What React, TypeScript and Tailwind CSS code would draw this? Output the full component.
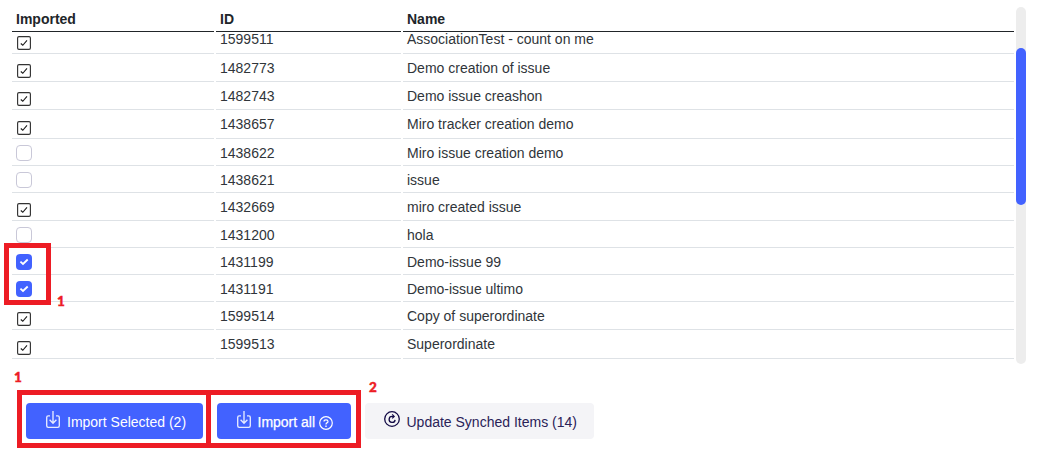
import React from "react";

type State = "synced" | "empty" | "selected";
interface Row {
  id: string;
  name: string;
  state: State;
  height: string;
}

const rows: Row[] = [
  { id: "1599511", name: "AssociationTest - count on me", state: "synced", height: "h-[29px]" },
  { id: "1482773", name: "Demo creation of issue", state: "synced", height: "h-[28px]" },
  { id: "1482743", name: "Demo issue creashon", state: "synced", height: "h-[28px]" },
  { id: "1438657", name: "Miro tracker creation demo", state: "synced", height: "h-[29px]" },
  { id: "1438622", name: "Miro issue creation demo", state: "empty", height: "h-[27px]" },
  { id: "1438621", name: "issue", state: "empty", height: "h-[27px]" },
  { id: "1432669", name: "miro created issue", state: "synced", height: "h-[28px]" },
  { id: "1431200", name: "hola", state: "empty", height: "h-[27px]" },
  { id: "1431199", name: "Demo-issue 99", state: "selected", height: "h-[27px]" },
  { id: "1431191", name: "Demo-issue ultimo", state: "selected", height: "h-[27px]" },
  { id: "1599514", name: "Copy of superordinate", state: "synced", height: "h-[28px]" },
  { id: "1599513", name: "Superordinate", state: "synced", height: "h-[29px]" },
];

function Check({ state }: { state: State }) {
  if (state === "synced") {
    return (
      <svg className="mb-[3px] ml-[5px] mt-auto block h-[14px] w-[14px]" viewBox="0 0 14 14" fill="none">
        <rect x="0.6" y="0.6" width="12.8" height="12.8" rx="1.4" stroke="#333" strokeWidth="1.15" />
        <path d="M3.8 7.5L5.8 9.3L10 4.4" stroke="#1d1d1d" strokeWidth="1.15" />
      </svg>
    );
  }
  if (state === "empty") {
    return <span className="ml-1 mt-1.5 block h-4 w-4 rounded-[4px] border border-[#c9c8d8] bg-white" />;
  }
  return (
    <span className="ml-1 mt-1.5 block h-4 w-4 rounded-[4px] bg-[#4262ff]">
      <svg className="block h-4 w-4" viewBox="0 0 16 16" fill="none">
        <path d="M4.4 7.6L7 10L11.7 5.5" stroke="#fff" strokeWidth="1.8" />
      </svg>
    </span>
  );
}

function ImportIcon() {
  return (
    <svg className="block h-[17px] w-[14px] shrink-0" viewBox="0 0 14 17" fill="none" stroke="#e6eaff" strokeWidth="1.35">
      <path d="M4 4.9H2.2Q0.7 4.9 0.7 6.4V14.8Q0.7 16.3 2.2 16.3H11.8Q13.3 16.3 13.3 14.8V6.4Q13.3 4.9 11.8 4.9H10" />
      <path d="M7 0V12.2M3.6 8.8L7 12.2L10.4 8.8" />
    </svg>
  );
}

function HelpIcon() {
  return (
    <svg className="block h-[14px] w-[14px] shrink-0" viewBox="0 0 14 14" fill="none" stroke="#fff" strokeWidth="1.2">
      <circle cx="7" cy="7" r="6.3" />
      <path d="M5 5.6Q5 3.8 7 3.8Q9 3.8 9 5.4Q9 6.4 7.9 6.9Q7 7.3 7 8.5" />
      <path d="M7 9.6V10.9" strokeWidth="1.4" />
    </svg>
  );
}

function RefreshIcon() {
  return (
    <svg className="block h-4 w-4 shrink-0" viewBox="0 0 16 16" fill="none" stroke="#120a45" strokeWidth="1.3">
      <circle cx="8" cy="8" r="7.3" />
      <path d="M9.8 5.4H8.2A3 3 0 1 0 11.1 8.8" />
      <path d="M8.2 3.4L10.2 5.4L8.2 7.4" strokeWidth="1.2" />
    </svg>
  );
}

export default function App() {
  return (
    <div className="relative h-[454px] w-[1040px] overflow-hidden bg-white pl-3 pt-[7px] font-['Liberation_Sans',Arial,sans-serif] text-[14px] leading-4 text-[#212529]">
      <div className="flex gap-[2px]">
        <div className="w-[1002px]">
          <div className="grid h-[25px] grid-cols-[202px_185px_611px] gap-x-[2px] font-bold">
            {["Imported", "ID", "Name"].map((h) => (
              <div key={h} className="border-b border-[#212529] pl-1 pt-1">{h}</div>
            ))}
          </div>
          <div className="h-[327px] overflow-hidden text-[#30353a]">
            <div className="-mt-[7px]">
              {rows.map((r) => (
                <div key={r.id} className={`grid grid-cols-[202px_185px_611px] gap-x-[2px] ${r.height}`}>
                  <div className="flex flex-col border-b border-[#dee2e6]">
                    <Check state={r.state} />
                  </div>
                  <div className="border-b border-[#dee2e6] pl-1 pt-[6px]">{r.id}</div>
                  <div className="border-b border-[#dee2e6] pl-1 pt-[6px]">{r.name}</div>
                </div>
              ))}
            </div>
          </div>
        </div>
        <div className="h-[357px] w-[10px] rounded-full bg-[#ededed] pt-[41px]">
          <div className="h-[157px] rounded-full bg-[#4262ff]" />
        </div>
      </div>

      <div className="ml-[14px] mt-[39px] flex h-9 gap-[14px] text-[14px]">
        <button className="flex w-[177px] rounded-[4px] bg-[#4262ff] pl-5 text-white">
          <span className="mt-2"><ImportIcon /></span>
          <span className="ml-[7px] mt-[11px] whitespace-nowrap">Import Selected (2)</span>
        </button>
        <button className="flex w-[134px] rounded-[4px] bg-[#4262ff] pl-5 text-white">
          <span className="mt-2"><ImportIcon /></span>
          <span className="ml-[6.5px] mt-[11px] whitespace-nowrap [-webkit-text-stroke:0.25px_white]">Import all</span>
          <span className="ml-[4px] mt-[13px]"><HelpIcon /></span>
        </button>
        <button className="flex w-[229px] rounded-[4px] bg-[#f4f4f7] pl-[19px] text-[#2a2258]">
          <span className="mt-2"><RefreshIcon /></span>
          <span className="ml-[6.5px] mt-[11px] whitespace-nowrap">Update Synched Items (14)</span>
        </button>
      </div>

      <div className="absolute left-1 top-[243px] h-[62px] w-[47px] border-[5px] border-[#ed1c24]" />
      <div className="absolute left-[17px] top-[390px] h-[58px] w-[194px] border-[5px] border-[#ed1c24]" />
      <div className="absolute left-[206px] top-[390px] h-[58px] w-[155px] border-[5px] border-[#ed1c24]" />
      <span className="absolute left-[57px] top-[293px] font-['Lato',sans-serif] text-[13.5px] font-black text-[#ed1c24] [-webkit-text-stroke:0.4px_#ed1c24]">1</span>
      <span className="absolute left-[14px] top-[369px] font-['Lato',sans-serif] text-[13.5px] font-black text-[#ed1c24] [-webkit-text-stroke:0.4px_#ed1c24]">1</span>
      <span className="absolute left-[369px] top-[379px] font-['Lato',sans-serif] text-[13.5px] font-black text-[#ed1c24] [-webkit-text-stroke:0.4px_#ed1c24]">2</span>
    </div>
  );
}
